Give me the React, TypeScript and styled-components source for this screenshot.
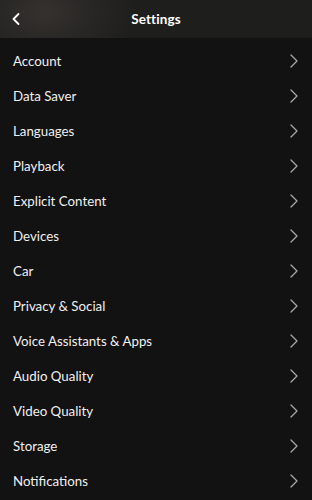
import React from 'react';
import styled, { createGlobalStyle } from 'styled-components';

const GlobalStyle = createGlobalStyle`
  html, body {
    margin: 0;
    padding: 0;
    background: #121212;
  }
  body {
    font-family: Lato, 'Liberation Sans', Arial, sans-serif;
    -webkit-font-smoothing: antialiased;
  }
`;

const Screen = styled.div`
  width: 312px;
  height: 500px;
  background: #121212;
  overflow: hidden;
  display: flex;
  flex-direction: column;
`;

const Header = styled.header`
  height: 38px;
  flex-shrink: 0;
  display: grid;
  grid-template-columns: 40px 1fr 40px;
  align-items: center;
  background: radial-gradient(ellipse 90px 60px at 45px 12px, #35322e 0%, #2a2826 45%, #1e1e1d 100%), #1c1c1c;
  background-color: #1c1c1c;
`;

const BackButton = styled.button`
  background: none;
  border: none;
  padding: 0 0 0 12px;
  height: 100%;
  display: flex;
  align-items: center;
  cursor: pointer;
`;

const Title = styled.h1`
  margin: 0;
  text-align: center;
  color: #ffffff;
  font-size: 13.5px;
  font-weight: 700;
  letter-spacing: 0.1px;
`;

const List = styled.ul`
  list-style: none;
  margin: 0;
  padding: 5px 0 0;
`;

const Row = styled.li`
  height: 35px;
  display: flex;
  align-items: center;
  justify-content: space-between;
  padding: 0 14px 0 13px;
  cursor: pointer;
`;

const Label = styled.span`
  color: #f0f0f0;
  font-size: 13.3px;
  font-weight: 400;
  letter-spacing: 0;
`;

const Chevron: React.FC<{ left?: boolean }> = ({ left }) => (
  <svg width="8" height="14" viewBox="0 0 8 14" fill="none">
    <path
      d={left ? 'M6.5 2 L1.5 7 L6.5 12' : 'M1 1 L7 7 L1 13'}
      stroke={left ? '#ffffff' : '#a8a8a8'}
      strokeWidth={left ? 1.8 : 1.3}
      strokeLinecap="round"
      strokeLinejoin="round"
    />
  </svg>
);

const items = [
  'Account',
  'Data Saver',
  'Languages',
  'Playback',
  'Explicit Content',
  'Devices',
  'Car',
  'Privacy & Social',
  'Voice Assistants & Apps',
  'Audio Quality',
  'Video Quality',
  'Storage',
  'Notifications',
];

const App: React.FC = () => (
  <>
    <GlobalStyle />
    <Screen>
      <Header>
        <BackButton aria-label="Back">
          <Chevron left />
        </BackButton>
        <Title>Settings</Title>
        <div />
      </Header>
      <List>
        {items.map((item) => (
          <Row key={item}>
            <Label>{item}</Label>
            <Chevron />
          </Row>
        ))}
      </List>
    </Screen>
  </>
);

export default App;
